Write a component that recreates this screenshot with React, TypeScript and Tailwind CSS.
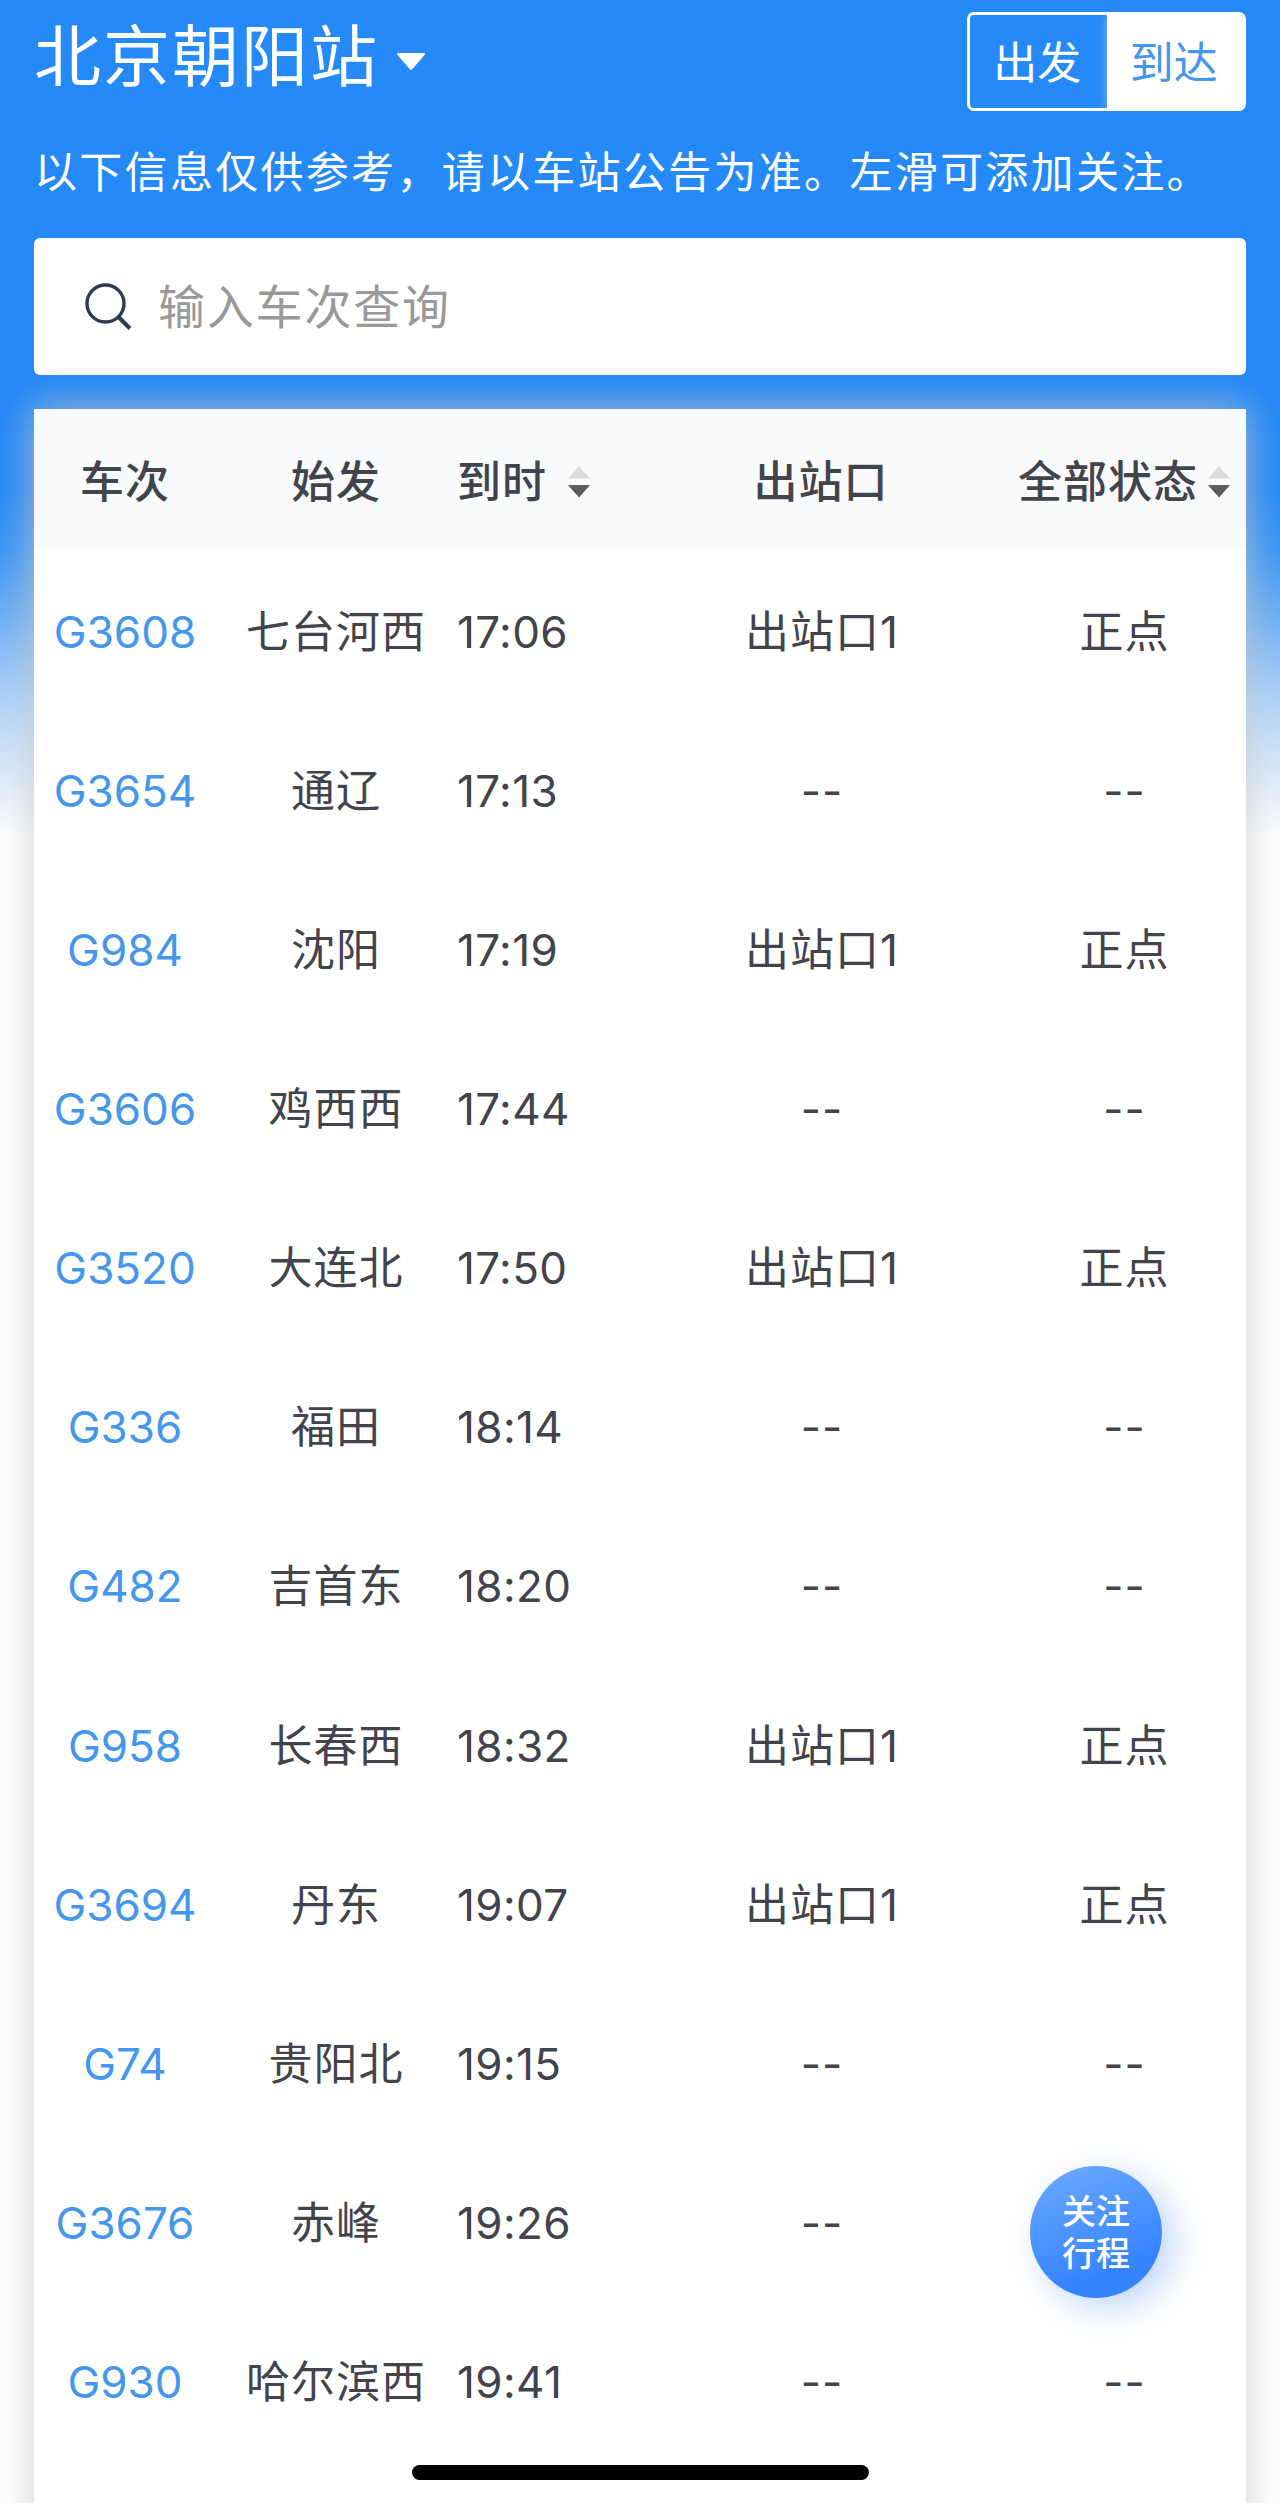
import { useState } from "react";

type Train = {
  code: string;
  origin: string;
  time: string;
  exit: string;
  status: string;
};

const TRAINS: Train[] = [
  { code: "G3608", origin: "七台河西", time: "17:06", exit: "出站口1", status: "正点" },
  { code: "G3654", origin: "通辽", time: "17:13", exit: "--", status: "--" },
  { code: "G984", origin: "沈阳", time: "17:19", exit: "出站口1", status: "正点" },
  { code: "G3606", origin: "鸡西西", time: "17:44", exit: "--", status: "--" },
  { code: "G3520", origin: "大连北", time: "17:50", exit: "出站口1", status: "正点" },
  { code: "G336", origin: "福田", time: "18:14", exit: "--", status: "--" },
  { code: "G482", origin: "吉首东", time: "18:20", exit: "--", status: "--" },
  { code: "G958", origin: "长春西", time: "18:32", exit: "出站口1", status: "正点" },
  { code: "G3694", origin: "丹东", time: "19:07", exit: "出站口1", status: "正点" },
  { code: "G74", origin: "贵阳北", time: "19:15", exit: "--", status: "--" },
  { code: "G3676", origin: "赤峰", time: "19:26", exit: "--", status: "" },
  { code: "G930", origin: "哈尔滨西", time: "19:41", exit: "--", status: "--" },
];

function SortIcon() {
  return (
    <svg viewBox="0 0 22 32" className="h-8 w-[22px] shrink-0">
      <path d="M11 0 L22 12.5 H0 Z" fill="#dcdcdc" />
      <path d="M0 19 H22 L11 31.5 Z" fill="#5c5c5c" />
    </svg>
  );
}

export default function App() {
  const [mode, setMode] = useState<"departure" | "arrival">("arrival");
  const [query, setQuery] = useState("");

  const rows = TRAINS.filter((t) => t.code.includes(query.trim().toUpperCase()));
  const active = "bg-white text-[#4497ec] shadow-[0_0_10px_rgba(255,255,255,0.4)]";

  return (
    <div
      lang="zh-CN"
      className="relative h-[2503px] w-[1280px] overflow-hidden bg-white bg-[linear-gradient(to_bottom,#2589f7_0px,#2589f7_490px,#3c96f5_551px,#72b2f6_625px,#aed3fa_700px,#dcebfc_775px,#ffffff_835px)] px-[34px] pt-3 font-[Inter,'Noto_Sans_CJK_SC',sans-serif] text-[44px] leading-none text-[#43434b]"
    >
      <header className="flex h-[99px] justify-between">
        <button type="button" className="flex h-[88px] items-center gap-[17px] text-white">
          <span className="text-[67px] tracking-[2px]">北京朝阳站</span>
          <svg viewBox="0 0 30 18" className="mt-3 h-[18px] w-[30px]">
            <path d="M2 1 H28 L15 16 Z" fill="#fff" stroke="#fff" strokeWidth="2" strokeLinejoin="round" />
          </svg>
        </button>

        <div className="flex w-[279px] overflow-hidden rounded-[7px] border-[3px] border-white pr-px text-white">
          <button
            type="button"
            onClick={() => setMode("departure")}
            className={`flex-1 pt-0.5 pr-0.5 ${mode === "departure" ? active : ""}`}
          >
            出发
          </button>
          <button
            type="button"
            onClick={() => setMode("arrival")}
            className={`-mr-px flex-1 pt-0.5 pr-0.5 ${mode === "arrival" ? active : ""}`}
          >
            到达
          </button>
        </div>
      </header>

      <p className="mt-9 h-[50px] whitespace-nowrap text-[43px] leading-[50px] tracking-[2.3px] text-white">
        以下信息仅供参考，请以车站公告为准。左滑可添加关注。
      </p>

      <label className="mt-[41px] flex h-[137px] items-center gap-[25px] rounded-[6px] bg-white pl-[51px]">
        <svg viewBox="0 0 48 48" className="h-12 w-12" fill="none" stroke="#2d3b50" strokeWidth="3.4">
          <circle cx="20.5" cy="20.5" r="18.5" />
          <path d="M33.5 34 L45 45.5" strokeWidth="4" />
        </svg>
        <input
          value={query}
          onChange={(e) => setQuery(e.target.value)}
          placeholder="输入车次查询"
          className="h-20 flex-1 text-[47px] tracking-[1.8px] outline-none placeholder:text-[#999]"
        />
      </label>

      <main className="mt-[34px] h-[2200px] bg-white shadow-[0_0_38px_rgba(200,200,200,0.85)]">
        <div className="grid h-[142px] grid-cols-[181px_242px_246px_236px_307px] items-center bg-[#f9fafc] pt-1 font-medium tracking-[1px]">
          <span className="pl-px text-center">车次</span>
          <span className="text-center">始发</span>
          <span className="flex items-center gap-[21px]">
            到时
            <SortIcon />
          </span>
          <span className="text-center">出站口</span>
          <span className="flex items-center justify-end gap-[10px] pr-4">
            全部状态
            <SortIcon />
          </span>
        </div>

        {rows.map((t) => (
          <div
            key={t.code}
            className="grid h-[159.15px] grid-cols-[181px_242px_246px_236px_307px] items-center pt-0.5"
          >
            <span className="pl-px text-center text-[#4497ec]">{t.code}</span>
            <span className="text-center tracking-[1px]">{t.origin}</span>
            <span className="tracking-[0.4px]">{t.time}</span>
            <span className="pl-0.5 text-center tracking-[1px]">{t.exit}</span>
            <span className="pl-[64px] text-center tracking-[1px]">{t.status}</span>
          </div>
        ))}
      </main>

      <button
        type="button"
        className="absolute top-[2166px] left-[1030px] flex size-[132px] flex-col items-center justify-center rounded-full bg-[linear-gradient(160deg,#6ba8ff_5%,#3584ff_75%)] pt-0.5 text-[34px] leading-[42px] font-medium text-white shadow-[12px_10px_34px_rgba(47,120,230,0.3)]"
      >
        <span>关注</span>
        <span>行程</span>
      </button>

      <div className="absolute top-[2465px] left-[412px] h-[15px] w-[457px] rounded-full bg-black" />
    </div>
  );
}
